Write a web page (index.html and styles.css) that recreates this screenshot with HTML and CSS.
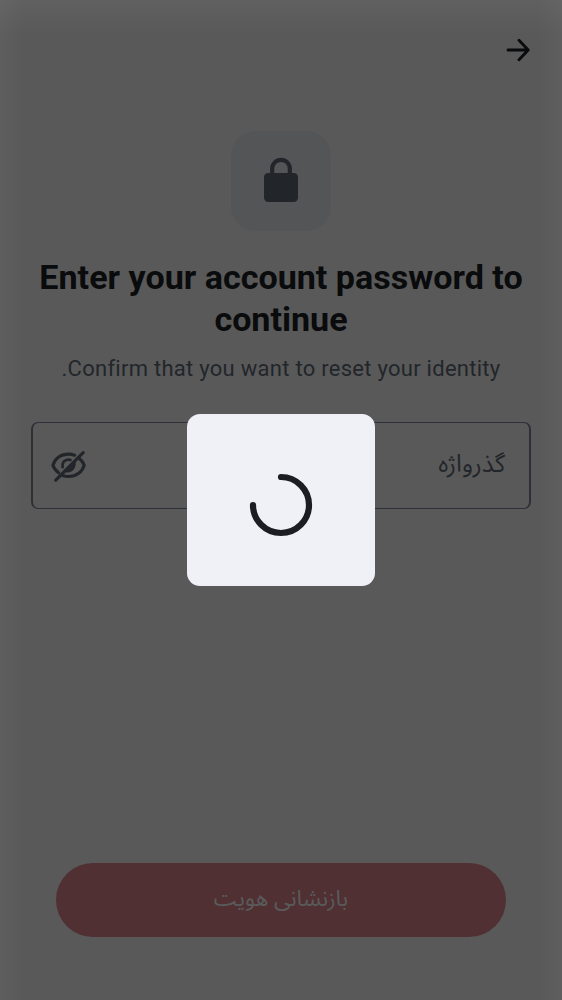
FILE: index.html
```html
<!DOCTYPE html>
<html lang="fa">
<head>
<meta charset="utf-8">
<title>Reset identity</title>
<link rel="stylesheet" href="styles.css">
</head>
<body>
<main class="screen">
  <header class="topbar">
    <svg class="arrow" viewBox="0 0 26 26"><path d="M3 13H23M14 3.3 23.2 13 14 22.7"/></svg>
  </header>
  <div class="badge">
    <svg class="lock" viewBox="0 0 36 46"><path class="shackle" d="M9.2 18V11.6a8.8 8.8 0 0 1 17.6 0V18"/><rect x="1" y="16" width="34" height="29" rx="4.2"/></svg>
  </div>
  <h1 class="title">Enter your account password to continue</h1>
  <p class="subtitle" dir="rtl">Confirm that you want to reset your identity.</p>
  <div class="field" dir="rtl">
    <span class="label">گذرواژه</span>
    <svg class="eye" viewBox="0 0 36 32">
      <path d="M7.6 22.8C4.8 20.8 2.8 18.1 1.9 15.3 4 8.2 10.2 4.1 17.5 4.1c2.2 0 4.3.4 6.2 1.1M28 8.2c2.5 1.9 4.3 4.4 5.2 7.1-2.1 7-8.2 11.2-15.7 11.2-2.1 0-4.1-.4-5.9-1"/>
      <path class="thin" d="M11.6 17.2c-.8-4.5 2-7.6 5.7-7.6.8 0 1.5.1 2.2.4"/>
      <path class="pupil" d="M12.6 21.6 24.2 10c2.6 8-4.2 15-11.6 11.6Z"/>
      <path d="M4.8 30.2 32.2 2.6"/>
    </svg>
  </div>
  <div class="button" dir="rtl">بازنشانی هویت</div>
</main>
<div class="overlay">
  <div class="dialog">
    <svg class="spinner" viewBox="0 0 64 64"><path d="M32 4A28 28 0 1 1 4 32"/></svg>
  </div>
</div>
</body>
</html>
```
FILE: styles.css
```css
* { box-sizing: border-box; }
body {
  margin: 0;
  background: #595959;
  font-family: Roboto, "Noto Sans Arabic", "Noto Sans", "DejaVu Sans", sans-serif;
}
.screen {
  height: 1000px;
  overflow: hidden;
  padding: 0 31px 63px;
  display: flex;
  flex-direction: column;
  align-items: center;
  background:
    linear-gradient(to bottom, rgba(255, 255, 255, .045), transparent 36px),
    linear-gradient(to right, rgba(255, 255, 255, .03), transparent 25px, transparent calc(100% - 25px), rgba(255, 255, 255, .03));
}
.topbar {
  width: 100%;
  height: 131px;
  padding: 37px 0 0;
  display: flex;
  justify-content: flex-end;
}
.arrow {
  width: 26px;
  height: 26px;
  fill: none;
  stroke: #0a0b0c;
  stroke-width: 2.9;
  stroke-linecap: round;
  stroke-linejoin: round;
}
.badge {
  width: 100px;
  height: 100px;
  border-radius: 25px;
  background: #545557;
  display: flex;
  align-items: center;
  justify-content: center;
}
.lock { width: 36px; height: 46px; margin-top: -2px; fill: #22252a; }
.shackle { fill: none; stroke: #22252a; stroke-width: 4.2; }
.title {
  margin: 25px 0 0;
  width: 500px;
  text-align: center;
  color: #0a0b0c;
  font-size: 34.1px;
  line-height: 42px;
  font-weight: 700;
}
.subtitle {
  margin: 14px 0 0;
  color: #22262a;
  font-size: 22px;
  line-height: 30px;
  letter-spacing: .27px;
  white-space: nowrap;
}
.field {
  width: 500px;
  height: 87px;
  margin-top: 38px;
  padding: 0 24px 0 18px;
  border: 1px solid #2d3036;
  border-width: 1px 2px;
  border-radius: 7px;
  display: flex;
  align-items: center;
  justify-content: space-between;
}
.label { color: #22262a; font-size: 24.5px; margin-top: -3px; }
.eye {
  width: 36px;
  height: 32px;
  fill: none;
  stroke: #22262a;
  stroke-width: 3.1;
  stroke-linecap: round;
}
.thin { stroke-width: 2.7; }
.pupil { fill: #22262a; stroke: none; }
.button {
  width: 450px;
  height: 74.5px;
  margin-top: auto;
  padding-bottom: 2px;
  border-radius: 38px;
  background: #503033;
  color: #595b5b;
  font-size: 22.4px;
  display: flex;
  align-items: center;
  justify-content: center;
}
.overlay {
  position: absolute;
  inset: 0;
  height: 1000px;
  display: flex;
  align-items: center;
  justify-content: center;
}
.dialog {
  width: 188px;
  height: 172px;
  border-radius: 13px;
  background: #f0f1f6;
  display: flex;
  align-items: center;
  justify-content: center;
}
.spinner {
  width: 64px;
  height: 64px;
  margin-top: 9px;
  fill: none;
  stroke: #1b1d22;
  stroke-width: 6.2;
  stroke-linecap: round;
}
```
